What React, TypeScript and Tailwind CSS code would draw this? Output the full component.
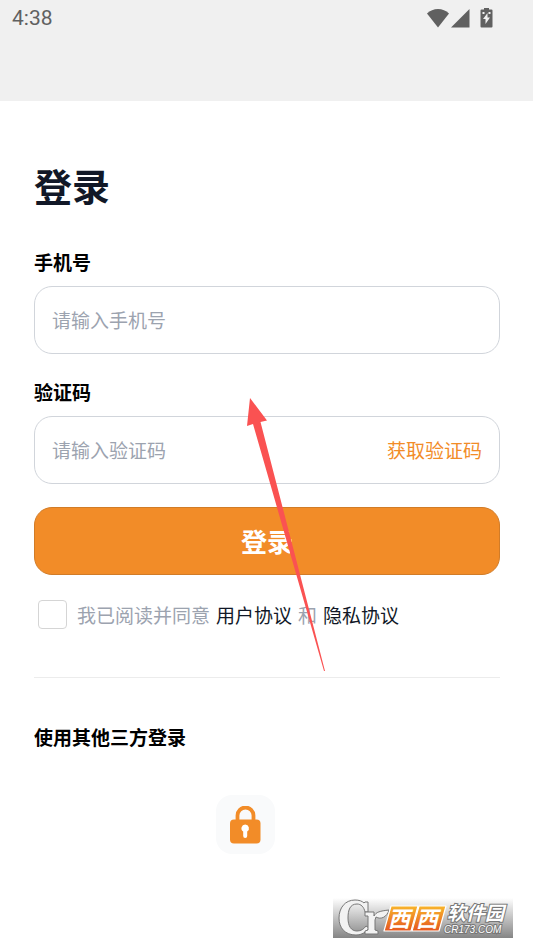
import { useState } from 'react';

function StatusBar() {
  return (
    <header className="h-[101px] bg-[#f0f0f0] pl-3 pr-10 text-[#606060]">
      <div className="flex h-9 items-center justify-between">
        <span className="font-[Roboto,sans-serif] text-[21px]">4:38</span>
        <div className="flex items-center">
          <svg className="h-[19px] w-[22px]" viewBox="0 0 22 19" fill="currentColor">
            <path d="M0 4.500C3 1.500 6.800 0 11 0s8 1.500 11 4.500L11 18.500z" />
          </svg>
          <svg className="ml-[2px] h-[19px] w-[19px]" viewBox="0 0 19 19" fill="currentColor">
            <path d="M0 18.500L18.500 0v18.500z" />
          </svg>
          <svg className="ml-[10px] h-5 w-[13px]" viewBox="0 0 12 20" fill="currentColor">
            <path d="M3.500 0h5v1.500h2.500q1 0 1 1v16q0 1-1 1H1q-1 0-1-1v-16q0-1 1-1h2.500z" />
            <path d="M7 5v4.500h2.500L5 16v-5H2.500zM2 4h2v2H2zM8 4h2v2H8z" fill="#f0f0f0" />
          </svg>
        </div>
      </div>
    </header>
  );
}

function LockIcon() {
  return (
    <svg className="h-[38px] w-[32px]" viewBox="0 0 32 38">
      <path d="M7.500 16v-6.500a8 8 0 0 1 16 0V16" fill="none" stroke="#f28c28" strokeWidth="3.800" />
      <rect x="0" y="13.500" width="30.500" height="24" rx="4" fill="#f28c28" />
      <path d="M15.200 18.500a3.800 3.800 0 0 1 2 7v4.500a2 2 0 0 1-4 0v-4.500a3.800 3.800 0 0 1 2-7z" fill="#fff" />
    </svg>
  );
}

const LOGO_C =
  'M35 4v10h-3C31 9 28 6 24 6c-7 0-9 6-9 14s3 13 9 13c4 0 7-2 9-5l3 2c-3 4-7 7-13 7C12 37 6 30 6 20S12 2 22 2c4 0 7 1 9 3l1-1z';
const LOGO_R =
  'M32 14h9v4c2-4 6-5 15-6-2 7-8 10-13 7l-1 3v10l3 1v3H32v-3l3-1V18h-3z';

function Watermark() {
  return (
    <svg className="absolute right-5 bottom-[10px] h-10 w-[180px]" viewBox="0 0 180 40">
      <defs>
        <linearGradient id="shade" x1="0" y1="0" x2="0" y2="1">
          <stop offset="0" stopColor="#fff" />
          <stop offset="1" stopColor="#858585" />
        </linearGradient>
        <linearGradient id="ember" x1="0" y1="0" x2="0" y2="1">
          <stop offset="0" stopColor="#f8b52c" />
          <stop offset="1" stopColor="#e5561f" />
        </linearGradient>
      </defs>
      <rect width="180" height="40" fill="url(#shade)" />
      <g fill="#f2f2f2" stroke="#777" strokeWidth="1" strokeLinejoin="round">
        <path d={LOGO_C} />
        <path d={LOGO_R} />
      </g>
      <g fill="url(#ember)" stroke="#fff" strokeWidth="1.200" strokeLinejoin="round">
        <path d="M58 8h27l-7 25H51z" />
        <path d="M86 8h27l-7 25H79z" />
      </g>
      <g fontFamily="'Noto Sans CJK SC', sans-serif" fontWeight="700" fontStyle="italic" fill="#fff">
        <text x="55" y="29" fontSize="22">西</text>
        <text x="83" y="29" fontSize="22">西</text>
        <text x="114" y="22" fontSize="19" stroke="#777" strokeWidth="2" paintOrder="stroke">
          软件园
        </text>
      </g>
      <text
        x="111"
        y="35"
        fontSize="10"
        fontFamily="'Liberation Sans', sans-serif"
        fontStyle="italic"
        fill="#fff"
        stroke="#777"
        strokeWidth="2"
        paintOrder="stroke"
      >
        CR173.COM
      </text>
    </svg>
  );
}

export default function App() {
  const [phone, setPhone] = useState('');
  const [code, setCode] = useState('');
  const [agreed, setAgreed] = useState(false);

  return (
    <div className="relative min-h-screen bg-white font-['Noto_Sans_CJK_SC',sans-serif] text-[19px] leading-7 text-black">
      <StatusBar />

      <main className="pt-[57px] pr-[33px] pl-[34px]">
        <form onSubmit={(e) => e.preventDefault()}>
          <h1 className="text-[38px] leading-[54px] font-bold text-[#111827]">登录</h1>

          <label htmlFor="phone" className="mt-9 block font-bold">
            手机号
          </label>
          <div className="mt-[10px] flex h-[68px] items-center rounded-[18px] border border-[#d1d5db] px-[17px]">
            <input
              id="phone"
              type="tel"
              value={phone}
              onChange={(e) => setPhone(e.target.value)}
              placeholder="请输入手机号"
              className="w-full outline-none placeholder:text-[#9ca3af]"
            />
          </div>

          <label htmlFor="code" className="mt-6 block font-bold">
            验证码
          </label>
          <div className="mt-[10px] flex h-[68px] items-center rounded-[18px] border border-[#d1d5db] px-[17px]">
            <input
              id="code"
              value={code}
              onChange={(e) => setCode(e.target.value)}
              placeholder="请输入验证码"
              className="min-w-0 flex-1 outline-none placeholder:text-[#9ca3af]"
            />
            <button type="button" className="text-[#f28c28]">
              获取验证码
            </button>
          </div>

          <button
            type="submit"
            className="mt-[23px] h-[68px] w-full rounded-[18px] border border-[#d17c28] bg-[#f28c28] text-[26px] font-bold text-white"
          >
            登录
          </button>

          <div className="mt-[25px] flex items-center pl-1 text-[#9ca3af]">
            <input
              id="agree"
              type="checkbox"
              checked={agreed}
              onChange={(e) => setAgreed(e.target.checked)}
              className="size-[29px] appearance-none rounded-[4px] border border-[#d5d5d5] checked:bg-[#f28c28]"
            />
            <label htmlFor="agree" className="ml-[10px] flex gap-[6px]">
              <span>我已阅读并同意</span>
              <a href="#terms" className="text-[#111827]">用户协议</a>
              <span>和</span>
              <a href="#privacy" className="text-[#111827]">隐私协议</a>
            </label>
          </div>
        </form>

        <section className="mt-12 border-t border-[#ececec] pt-[45px]">
          <h2 className="font-bold">使用其他三方登录</h2>
          <button
            type="button"
            aria-label="一键登录"
            className="mt-11 ml-[182px] flex size-[59px] items-center justify-center rounded-2xl bg-[#f9fafb]"
          >
            <LockIcon />
          </button>
        </section>
      </main>

      {/* Pointer arrow over the form */}
      <svg
        className="pointer-events-none absolute top-[398px] left-[246px] h-[274px] w-20"
        viewBox="0 0 80 274"
        fill="#fa5252"
      >
        <path d="M4 0L21 22.500l-6.500 1.500L79 273h-1L7 26l-6 2z" />
      </svg>

      <Watermark />
    </div>
  );
}
